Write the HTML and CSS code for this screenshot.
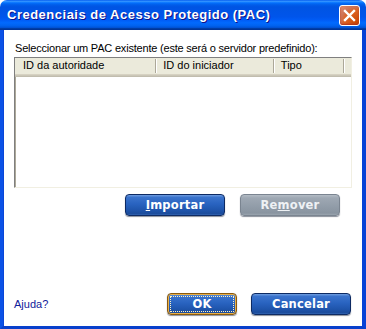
FILE: index.html
```html
<!doctype html>
<html lang="pt">
<head>
    <meta charset="utf-8">
    <title>Credenciais de Acesso Protegido (PAC)</title>
    <link rel="stylesheet" href="styles.css">
</head>
<body>
    <div class="window">
        <div class="titlebar">
            <span class="title">Credenciais de Acesso Protegido (PAC)</span>
            <div class="close">
                <svg width="13" height="13" viewBox="0 0 13 13">
                    <path d="M2 2 L11 11 M11 2 L2 11" stroke="#fff" stroke-width="2.4" stroke-linecap="square"/>
                </svg>
            </div>
        </div>

        <div class="content">
            <div class="prompt">Seleccionar um PAC existente (este será o servidor predefinido):</div>

            <div class="list">
                <div class="list-head">
                    <div class="col col-auth">ID da autoridade</div>
                    <div class="col col-init">ID do iniciador</div>
                    <div class="col col-type">Tipo</div>
                    <div class="col col-rest"></div>
                </div>
            </div>

            <div class="actions">
                <div class="btn"><u>I</u>mportar</div>
                <div class="btn disabled">Re<u>m</u>over</div>
            </div>

            <div class="footer">
                <a class="help" href="#">Ajuda?</a>
                <div class="footer-buttons">
                    <div class="btn small focused"><span class="focus">OK</span></div>
                    <div class="btn">Cancelar</div>
                </div>
            </div>
        </div>
    </div>
</body>
</html>
```

FILE: styles.css
```css
* {
  box-sizing: border-box;
}

html,
body {
  margin: 0;
  background: #fff;
}

.window {
  width: 366px;
  height: 329px;
  display: flex;
  flex-direction: column;
  font-family: 'Liberation Sans', Arial, sans-serif;
}

.titlebar {
  height: 30px;
  flex: none;
  display: flex;
  align-items: center;
  justify-content: space-between;
  padding: 0 6px 0 7px;
  border-radius: 7px 7px 0 0;
  background: linear-gradient(to bottom, #0058ee 0%, #3593ff 4%, #288eff 6%, #127dff 8%, #036ffc 10%, #0262ee 14%, #0057e5 20%, #0054e3 24%, #0055eb 56%, #005bf5 66%, #026afe 76%, #0062ef 86%, #0052d6 92%, #0040ab 94%, #003092 100%);
}

.title {
  color: #fff;
  font-weight: bold;
  font-size: 13px;
  letter-spacing: 0.5px;
  text-shadow: 1px 1px #0f1089;
  padding-bottom: 1px;
}

.close {
  width: 21px;
  height: 21px;
  display: flex;
  align-items: center;
  justify-content: center;
  border: 1px solid #fff;
  border-radius: 3px;
  background: radial-gradient(circle at 90% 90%, #cc4600 0%, #dc6527 55%, #cd7356 68%, #e48e6f 100%);
  box-shadow: inset 0 -1px 2px #b0321a;
}

.content {
  flex: 1;
  display: flex;
  flex-direction: column;
  background: #fff;
  border-left: 3px solid #0b52e6;
  border-right: 4px solid #0842d6;
  border-bottom: 3px solid #0840cc;
  box-shadow: inset 1px 0 #0a46d8;
  padding: 12px 10px 11px 11px;
  font-size: 11px;
  color: #000;
}

.prompt {
  line-height: 13px;
  letter-spacing: -0.2px;
  margin-left: 1px;
}

.list {
  margin-top: 2px;
  height: 131px;
  border: 1px solid;
  border-color: #7f7f7f #f1efe2 #f1efe2 #7f7f7f;
  box-shadow: inset 1px 1px #aca899;
  background: #fff;
}

.list-head {
  display: flex;
  height: 19px;
  background: #ebeadb;
  border-bottom: 1px solid #c1bdae;
  box-shadow: inset 0 -1px #cbc7b8, inset 0 -2px #d6d2c2;
}

.col {
  display: flex;
  align-items: center;
  padding: 0 0 2px 7px;
  border-right: 1px solid #aca899;
  box-shadow: 1px 0 #fff;
  margin-top: 1px;
  margin-bottom: 3px;
  white-space: nowrap;
}

.col-auth {
  width: 142px;
  margin-left: 1px;
}

.col-init {
  width: 119px;
}

.col-type {
  width: 71px;
}

.col-rest {
  flex: 1;
  border-right: none;
  box-shadow: none;
}

.actions {
  display: flex;
  justify-content: flex-end;
  gap: 15px;
  margin-top: 6px;
  padding-right: 12px;
}

.btn {
  width: 100px;
  height: 22px;
  display: flex;
  align-items: center;
  justify-content: center;
  border: 1px solid #0d2a63;
  border-radius: 4px;
  background: linear-gradient(to bottom, #6f9de0 0%, #3a73cc 12%, #2963c0 45%, #1f55ac 75%, #1b4c9c 92%, #3163b0 100%);
  box-shadow: 0 1px 1px #8a8f9a;
  color: #fff;
  font-family: 'DejaVu Sans', Verdana, sans-serif;
  font-weight: bold;
  font-size: 11.5px;
  letter-spacing: 0.2px;
}

.btn u {
  text-underline-offset: 1px;
}

.btn.disabled {
  border-color: #7a8490;
  background: linear-gradient(to bottom, #b4bcc5 0%, #9ea8b3 15%, #929da9 55%, #8994a0 90%, #9aa4ae 100%);
  color: #eef1f4;
}

.btn.small {
  width: 70px;
}

.btn.focused {
  border-color: #8a5a10;
  box-shadow: inset 0 0 0 1px #e8b048, 0 1px 1px #8a8f9a;
  padding: 2px;
}

.focus {
  flex: 1;
  align-self: stretch;
  display: flex;
  align-items: center;
  justify-content: center;
  outline: 1px dotted #fff3c0;
  outline-offset: -1px;
}

.footer {
  margin-top: auto;
  display: flex;
  align-items: center;
  justify-content: space-between;
  padding-right: 1px;
}

.help {
  color: #10209a;
  text-decoration: none;
  font-size: 11px;
}

.footer-buttons {
  display: flex;
  gap: 14px;
}
```
